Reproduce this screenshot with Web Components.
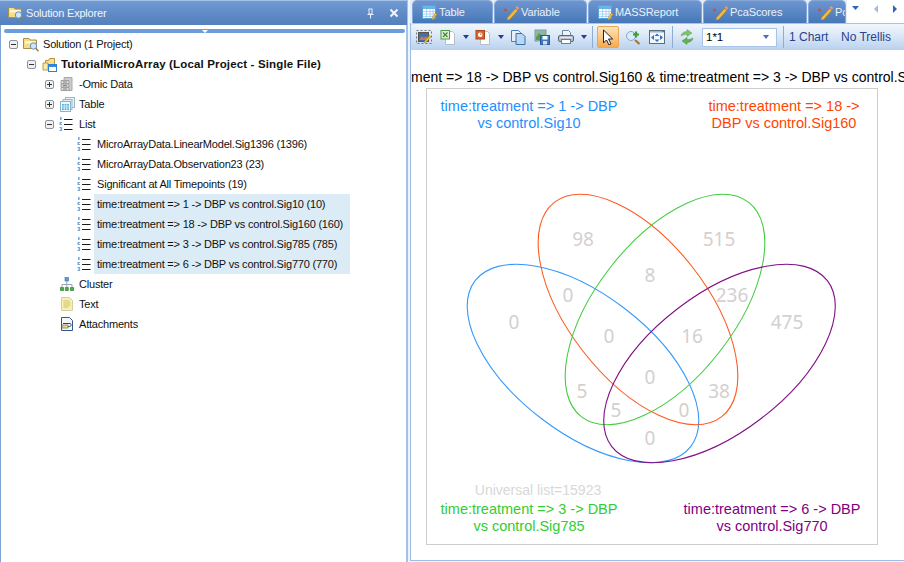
<!DOCTYPE html>
<html>
<head>
<meta charset="utf-8">
<title>Venn</title>
<style>
  html, body { margin: 0; height: 100%; overflow: hidden; background: #fff; }
  body { display: flex; width: 904px; height: 562px; font-family: "Liberation Sans", sans-serif; }
</style>
</head>
<body>
<solution-explorer>
  <tree-node depth="0" toggle="minus" icon="solution">Solution (1 Project)</tree-node>
  <tree-node depth="1" toggle="minus" icon="project" bold>TutorialMicroArray (Local Project - Single File)</tree-node>
  <tree-node depth="2" toggle="plus" icon="omic">-Omic Data</tree-node>
  <tree-node depth="2" toggle="plus" icon="table">Table</tree-node>
  <tree-node depth="2" toggle="minus" icon="list">List</tree-node>
  <tree-node depth="3" icon="list">MicroArrayData.LinearModel.Sig1396 (1396)</tree-node>
  <tree-node depth="3" icon="list">MicroArrayData.Observation23 (23)</tree-node>
  <tree-node depth="3" icon="list">Significant at All Timepoints (19)</tree-node>
  <tree-node depth="3" icon="list" selected>time:treatment =&gt; 1 -&gt; DBP vs control.Sig10 (10)</tree-node>
  <tree-node depth="3" icon="list" selected>time:treatment =&gt; 18 -&gt; DBP vs control.Sig160 (160)</tree-node>
  <tree-node depth="3" icon="list" selected>time:treatment =&gt; 3 -&gt; DBP vs control.Sig785 (785)</tree-node>
  <tree-node depth="3" icon="list" selected>time:treatment =&gt; 6 -&gt; DBP vs control.Sig770 (770)</tree-node>
  <tree-node depth="2" icon="cluster">Cluster</tree-node>
  <tree-node depth="2" icon="note">Text</tree-node>
  <tree-node depth="2" icon="attach">Attachments</tree-node>
</solution-explorer>
<doc-workspace>
  <doc-tab slot="tabs" icon="tabletab" width="81">Table</doc-tab>
  <doc-tab slot="tabs" icon="pencil" width="93">Variable</doc-tab>
  <doc-tab slot="tabs" icon="tabletab" width="114">MASSReport</doc-tab>
  <doc-tab slot="tabs" icon="pencil" width="104">PcaScores</doc-tab>
  <doc-tab slot="tabs" icon="pencil" width="38">Pc</doc-tab>
  <chart-toolbar slot="toolbar"></chart-toolbar>
  <venn-chart></venn-chart>
</doc-workspace>

<script>
const ICONS = {
  solution: `<path d="M.5 2.500h5.500l1 1.500h6.500v8.500H.5z" fill="#f6dc84" stroke="#a8904a"/><path d="M2 5h10v2.500H2z" fill="#fff6cf"/><circle cx="10.500" cy="10" r="3.200" fill="#cfe4f8" stroke="#6d8fb5"/><path d="M12.700 12.300l2.800 3" stroke="#a07a40" stroke-width="1.600"/>`,
  project: `<path d="M4.500 4.500h3l1-2h5v9h-9z" fill="#f9e08a" stroke="#b8923c"/><path d="M2 7h5v7H2z" fill="#fbe9a8" stroke="#c09a44"/><rect x="7.500" y="8.500" width="8" height="7" fill="#fff" stroke="#2f7fd6"/><path d="M7.500 9h8v2h-8z" fill="#2f8be0"/>`,
  omic: `<path d="M5 1.500h8v13H5z" fill="#cdcdcd" stroke="#a8a8a8"/><path d="M2 4.500h8v3H2zM2 8h8v3H2zM2 11.500h8v3H2z" fill="#dedede" stroke="#a0a0a0"/><path d="M4 6h4M4 9.500h4M4 13h4" stroke="#858585"/>`,
  table: `<rect x="6.500" y="1.500" width="9" height="10" fill="#e6f1f7" stroke="#9fb9c4"/><rect x="4" y="3.500" width="9" height="10" fill="#d9ebf4" stroke="#9fb9c4"/><rect x="1.500" y="5.500" width="10" height="10" fill="#eef7fb" stroke="#8fb2c4"/><path d="M3 8h7v6H3z" fill="#52b2ea"/><path d="M3 10h7M3 12h7M5.300 8v6M7.700 8v6" stroke="#d8f0fc" stroke-width=".8"/>`,
  list: `<path d="M1 1h1.600v3H1zM.5 6h2.600v1H2v1h1.100v1H.5zM.5 11h2.600v4H.5v-1h1.600v-.5H1v-1h1.100V12H.5z" fill="#5b9bd9" opacity=".85"/><path d="M5 3.500h8.500M5 8.500h8.500M5 13.500h8.500" stroke="#1a1a1a" stroke-width="1.100"/>`,
  cluster: `<rect x="6" y="1.500" width="3.500" height="3.500" fill="#5b9be0" stroke="#3a70b5" stroke-width=".6"/><path d="M7.800 5v3M3 11V8.500h10V11M7.800 8.500V11" fill="none" stroke="#9aa8b4"/><path d="M1.500 11.500h3v3h-3zM6.300 11.500h3v3h-3zM11.500 11.500h3v3h-3z" fill="#4dae4d" stroke="#2a802a" stroke-width=".7"/>`,
  note: `<path d="M2.500 1.500h8l3 3v10h-11z" fill="#f7f0b0" stroke="#cfcfa8"/><path d="M4.500 5h6M4.500 7h7M4.500 9h7M4.500 11h5" stroke="#cfc070"/>`,
  attach: `<path d="M2.500 1.500h8l3 3v10h-11z" fill="#f3f6fa" stroke="#34568f"/><path d="M4 7.500h7c1.500 0 1.500 3-.4 3H5.500" fill="none" stroke="#444" stroke-width="1"/><path d="M3 9h6v3H3z" fill="#e6d98a" stroke="#77713f" stroke-width=".7"/>`,
  tabletab: `<rect x="1.500" y="1.500" width="13" height="13" fill="#fff" stroke="#5aa2dc"/><path d="M2 2h12v3H2z" fill="#6bb4ea"/><path d="M2 7.500h12M2 10h12M2 12.500h12M5.500 5v9M9 5v9M12 5v9" stroke="#9ccbf0" stroke-width=".8"/><path d="M10.500 15l4-6 1.600 1.100-4 6z" fill="#f4bd3d" stroke="#a56f1c" stroke-width=".5"/>`,
  pencil: `<path d="M4.500 13.500l8-9 2.300 2-8 9-3 .8z" fill="#f2bb3c" stroke="#ad7a20" stroke-width=".6"/><path d="M12.500 3.500l1.600-1.600 2.200 2-1.600 1.800z" fill="#e9967a"/><circle cx="2.500" cy="6" r="1.400" fill="#d14b3a"/><circle cx="6" cy="4.500" r="1" fill="#6b8fc2"/><circle cx="2.600" cy="10.500" r="1" fill="#5c7fb5"/>`,
  picture: `<rect x=".5" y="1.500" width="15" height="13" fill="none" stroke="#777" stroke-dasharray="2 2"/><rect x="2.500" y="3.500" width="10" height="9" fill="#4a6c9e" stroke="#555"/><path d="M3 11l3-4 2 2 2-2 2 4z" fill="#b37f6a"/><path d="M8 13l5.500-6.500 1.500 1.200L9.500 14z" fill="#f4c53a" stroke="#9c6f1a" stroke-width=".5"/>`,
  excel: `<path d="M5.500 2.500h7l2 2v11h-9z" fill="#fff" stroke="#b5bfca"/><rect x="1" y="1.500" width="8.500" height="8.500" fill="#dcefd4" stroke="#4f9a3f"/><path d="M3 3.500l4.500 4.500M7.500 3.500L3 8" stroke="#3e8a2e" stroke-width="1.200"/>`,
  ppt: `<path d="M5.500 2.500h7l2 2v11h-9z" fill="#fff" stroke="#b5bfca"/><rect x="1" y="1.500" width="8.500" height="8.500" fill="#d9632a" stroke="#a7461a"/><circle cx="5.200" cy="5.700" r="2.300" fill="#fff"/><path d="M5.200 3.700v2h2" fill="#d9632a"/>`,
  copy: `<path d="M1.500 1.500h7l2 2v9h-9z" fill="#e7f0fa" stroke="#4e7fb5"/><path d="M6 4.500h6l3 3v8H6z" fill="#b9d6f3" stroke="#3c6ea8"/>`,
  save: `<rect x="1" y="1" width="11" height="11" fill="#8fb8a4" stroke="#7c9cb0"/><path d="M2 8l3-4 3 3 3-2v6H2z" fill="#5c9c4a"/><rect x="6.500" y="6.500" width="9" height="9" fill="#3f78c0" stroke="#2b5a99"/><rect x="8.500" y="7" width="5" height="3.500" fill="#fff"/><rect x="9" y="12" width="4" height="3.500" fill="#d5dfeb"/>`,
  printer: `<path d="M4.500 1.500h6l2 2v4h-8z" fill="#eef4fb" stroke="#6f88a8"/><rect x=".5" y="6.500" width="15" height="6" rx="1.500" fill="#b9c2cc" stroke="#5c6876"/><rect x="3.500" y="10.500" width="9" height="4" fill="#fff" stroke="#6f7d8c"/><path d="M2 8.500h12" stroke="#e6ebf0"/>`,
  pointer: `<path d="M3.500 1v13l3-3 2.500 5 2-1-2.500-5h4.200z" fill="#fff" stroke="#222" stroke-width="1"/>`,
  zoom: `<circle cx="6" cy="7" r="4.500" fill="#d9ecfa" stroke="#8aa6bd"/><path d="M10 11l4.500 4" stroke="#9c7a3c" stroke-width="2.200"/><path d="M11 2.500v6M8 5.500h6" stroke="#3d9b3d" stroke-width="2.200"/>`,
  fit: `<rect x=".5" y="1.500" width="15" height="13" fill="#f2f6fb" stroke="#5a6c80"/><path d="M1 2h14v1.500H1z" fill="#9eb2c8"/><path d="M13 2h2v1h-2z" fill="#d9534f"/><path d="M2 8.500l3-2.500v5zM14 8.500L11 6v5zM8 4.500L5.500 7h5zM8 13l-2.500-2.500h5z" fill="#2e74c0"/>`,
  refresh: `<path d="M2 7c.5-3 3-4.500 6-4.500V.5l5 3.500-5 3.500V5.500c-2.500 0-4 .5-6 1.500z" fill="#7cc46a" stroke="#4f9c40" stroke-width=".4"/><path d="M14 9c-.5 3-3 4.500-6 4.500v2L3 12l5-3.500v2c2.500 0 4-.5 6-1.500z" fill="#5fb350" stroke="#3a8c2e" stroke-width=".4"/>`,
};

function iconSvg(name) {
  return `<svg width="16" height="16" viewBox="0 0 16 16" aria-hidden="true">${ICONS[name] || ""}</svg>`;
}

class SolutionExplorer extends HTMLElement {
  constructor() {
    super();
    this.shadow = this.attachShadow({ mode: "open" });
  }

  connectedCallback() {
    this.shadow.innerHTML = `
    <style>
      :host {
        display: flex;
        flex-direction: column;
        width: 407px;
        height: 562px;
        flex: none;
        background: #fff;
        box-sizing: border-box;
      }
      .title {
        height: 25px;
        display: flex;
        align-items: center;
        gap: 2px;
        padding: 0 8px 0 8px;
        color: #f2f6fc;
        font-size: 11px;
        letter-spacing: -.2px;
        background: linear-gradient(#6f9ad2 0, #5f8ac6 55%, #5480bd 100%);
        border-top: 1px solid #a5c2e8;
        box-sizing: border-box;
      }
      .title svg { flex: none; }
      .name { flex: 1; }
      .pin, .close { display: flex; }
      .pin { margin-right: 11px; }
      .frame {
        flex: 1;
        display: flex;
        flex-direction: column;
        background: #fff;
        border-left: 1px solid #7fa3d4;
        border-right: 1px solid #a8c3e8;
        padding: 0 1px 0 3px;
      }
      .grip {
        margin-top: 4px;
        height: 4px;
        border-radius: 2px;
        background: #6d9edb;
        display: flex;
        justify-content: center;
        flex: none;
      }
      .grip i {
        width: 0;
        height: 0;
        border: 3px solid transparent;
        border-top: 3px solid #fff;
        border-bottom: 0;
        margin-top: 1px;
      }
      .tree { padding-top: 1px; margin-left: -4px; }
    </style>
    <div class="title">
      ${iconSvg("solution")}
      <span class="name">Solution Explorer</span>
      <span class="pin"><svg width="11" height="11" viewBox="0 0 11 11"><path d="M3.500 1h4M4 1v5h3V1M2.500 6.500h6M5.500 7v3.500" fill="none" stroke="#e8f0fa"/></svg></span>
      <span class="close"><svg width="10" height="10" viewBox="0 0 10 10"><path d="M1.500 1.500l7 7M8.500 1.500l-7 7" stroke="#f2f6fc" stroke-width="2"/></svg></span>
    </div>
    <div class="frame">
      <div class="grip"><i></i></div>
      <div class="tree"><slot></slot></div>
    </div>`;
  }
}

class TreeNode extends HTMLElement {
  constructor() {
    super();
    this.shadow = this.attachShadow({ mode: "open" });
  }

  connectedCallback() {
    const depth = Number(this.getAttribute("depth") || 0);
    const toggle = this.getAttribute("toggle");
    const sign = toggle === "plus" ? "M2 4.500h5M4.500 2v5" : "M2 4.500h5";
    const box = toggle
      ? `<svg width="9" height="9" viewBox="0 0 9 9"><rect x=".5" y=".5" width="8" height="8" rx="1.500" fill="#eef0f3" stroke="#8d939b"/><path d="${sign}" stroke="#333"/></svg>`
      : "";
    this.shadow.innerHTML = `
    <style>
      :host {
        display: block;
        height: 20px;
        color: #111;
        font-size: 11px;
        letter-spacing: -.2px;
        white-space: nowrap;
      }
      .row {
        display: flex;
        align-items: center;
        height: 20px;
        padding-left: ${9 + 18 * depth}px;
      }
      .toggle { width: 9px; height: 9px; margin-right: 5px; flex: none; display: flex; }
      .icon { width: 16px; height: 16px; flex: none; display: flex; margin-right: 1px; }
      .label { padding: 0 3px; height: 20px; line-height: 20px; box-sizing: border-box; }
      :host([bold]) .label { font-weight: 700; font-size: 11.500px; letter-spacing: .15px; }
      :host([selected]) .label { background: #dcecf6; width: 256px; }
    </style>
    <div class="row">
      <span class="toggle">${box}</span>
      <span class="icon">${iconSvg(this.getAttribute("icon"))}</span>
      <span class="label"><slot></slot></span>
    </div>`;
  }
}

class DocWorkspace extends HTMLElement {
  constructor() {
    super();
    this.shadow = this.attachShadow({ mode: "open" });
  }

  connectedCallback() {
    this.shadow.innerHTML = `
    <style>
      :host {
        display: flex;
        flex-direction: column;
        flex: 1;
        min-width: 0;
        height: 562px;
        box-sizing: border-box;
        border-left: 1px solid #a3c0e8;
        padding: 0 0 1px 2px;
        background: #eef4fb;
      }
      .strip { display: flex; height: 23px; flex: none; background: #fff; }
      .tabs { flex: 1; min-width: 0; display: flex; gap: 1px; overflow: hidden; padding-left: 2px; background: #e4edf8; }
      .nav { width: 57px; flex: none; display: flex; align-items: center; padding-bottom: 5px; box-sizing: border-box; background: #fff; }
      .nav svg { display: block; }
      .panel {
        flex: 1;
        min-height: 0;
        display: flex;
        flex-direction: column;
        background: #fff;
        border-left: 1px solid #9dbce6;
        border-bottom: 1px solid #9dbce6;
      }
    </style>
    <div class="strip">
      <div class="tabs"><slot name="tabs"></slot></div>
      <div class="nav">
        <svg width="57" height="12" viewBox="0 0 57 12">
          <path d="M5 3h7l-3.500 4z" fill="#2f66b8"/>
          <path d="M31 2v8l-4-4z" fill="#a9bcd4"/>
          <path d="M46 2v8l4-4z" fill="#2f66b8"/>
        </svg>
      </div>
    </div>
    <div class="panel">
      <slot name="toolbar"></slot>
      <slot></slot>
    </div>`;
  }
}

class DocTab extends HTMLElement {
  constructor() {
    super();
    this.shadow = this.attachShadow({ mode: "open" });
  }

  connectedCallback() {
    this.shadow.innerHTML = `
    <style>
      :host {
        display: flex;
        flex: none;
        align-items: center;
        gap: 2px;
        width: ${this.getAttribute("width")}px;
        height: 23px;
        box-sizing: border-box;
        padding: 0 0 1px 8px;
        overflow: hidden;
        white-space: nowrap;
        font-size: 11px;
        letter-spacing: -.1px;
        color: #eaf1fb;
        border-radius: 5px 5px 0 0;
        border: 1px solid #85a8d8;
        border-bottom: 0;
        background: linear-gradient(#6d96cf, #4777b8);
      }
      svg { flex: none; }
    </style>
    ${iconSvg(this.getAttribute("icon"))}<slot></slot>`;
  }
}

class ToolBtn extends HTMLElement {
  constructor() {
    super();
    this.shadow = this.attachShadow({ mode: "open" });
  }

  connectedCallback() {
    this.shadow.innerHTML = `
    <style>
      :host {
        display: flex;
        flex: none;
        width: 24px;
        height: 22px;
        align-items: center;
        justify-content: center;
      }
      :host([active]) {
        width: 22px;
        margin: 0 2px 0 1px;
        box-sizing: border-box;
        border: 1px solid #e6a857;
        border-radius: 2px;
        background: linear-gradient(#fde3b6, #fbc57f 55%, #f7a94c);
      }
      svg { display: block; }
    </style>
    ${iconSvg(this.getAttribute("icon"))}`;
  }
}

class ChartToolbar extends HTMLElement {
  constructor() {
    super();
    this.shadow = this.attachShadow({ mode: "open" });
  }

  connectedCallback() {
    const caret = `<span class="caret"></span>`;
    const sep = (w) => `<span class="sep" style="width:${w}px"><i></i></span>`;
    this.shadow.innerHTML = `
    <style>
      :host {
        display: flex;
        align-items: center;
        height: 27px;
        flex: none;
        box-sizing: border-box;
        padding-left: 1px;
        white-space: nowrap;
        font-size: 12px;
        color: #27418f;
        background: linear-gradient(#f1f6fc 0, #dbe8f7 45%, #b9d1ef 100%);
        border-top: 1px solid #a9c4e9;
        border-radius: 3px 0 0 0;
      }
      .caret {
        width: 11px;
        height: 4px;
        display: flex;
        justify-content: center;
        flex: none;
      }
      .caret::before {
        content: "";
        border: 3px solid transparent;
        border-top: 4px solid #1f3f8f;
        border-bottom: 0;
      }
      .sep { display: flex; justify-content: center; height: 22px; flex: none; }
      .sep i { width: 1px; background: #8fadd4; }
      .combo {
        width: 75px;
        height: 19px;
        margin-left: 3px;
        flex: none;
        box-sizing: border-box;
        border: 1px solid #a9c4e9;
        background: #fff;
        color: #000;
        display: flex;
        align-items: center;
        justify-content: space-between;
        padding: 0 7px 0 3px;
        font-size: 11.500px;
      }
      .combo .caret { width: 7px; }
      .combo .caret::before { border-top-color: #4a6fa8; }
      .txt { flex: none; }
    </style>
    <tool-btn icon="picture"></tool-btn>
    <tool-btn icon="excel"></tool-btn>${caret}
    <tool-btn icon="ppt"></tool-btn>${caret}
    <tool-btn icon="copy"></tool-btn>
    <tool-btn icon="save"></tool-btn>
    <tool-btn icon="printer"></tool-btn>${caret}
    ${sep(7)}
    <tool-btn icon="pointer" active></tool-btn>
    <tool-btn icon="zoom"></tool-btn>
    <tool-btn icon="fit"></tool-btn>
    ${sep(6)}
    <tool-btn icon="refresh"></tool-btn>
    <div class="combo"><span>1*1</span><span class="caret"></span></div>
    ${sep(12)}
    <span class="txt" style="width:52px">1 Chart</span>
    <span class="txt">No Trellis</span>`;
  }
}

class VennChart extends HTMLElement {
  constructor() {
    super();
    this.shadow = this.attachShadow({ mode: "open" });
  }

  connectedCallback() {
    const counts = [
      [583, 239, "98"], [719, 239, "515"], [650, 275, "8"], [568, 295, "0"],
      [732, 295, "236"], [514, 322, "0"], [787, 322, "475"], [609, 336, "0"],
      [692, 336, "16"], [650, 377, "0"], [582, 391, "5"], [719, 391, "38"],
      [616, 410, "5"], [684, 410, "0"], [650, 438, "0"],
    ];
    this.shadow.innerHTML = `
    <style>
      :host {
        display: flex;
        flex-direction: column;
        flex: 1;
        min-height: 0;
        overflow: hidden;
      }
      .title {
        height: 38px;
        flex: none;
        display: flex;
        align-items: flex-end;
        padding: 0 0 3px 0;
        box-sizing: border-box;
        white-space: nowrap;
        overflow: hidden;
        font: 14px "Liberation Sans", sans-serif;
        color: #000;
      }
      .title span { flex: none; }
      .box {
        width: 452px;
        height: 457px;
        margin-left: 15px;
        flex: none;
        box-sizing: border-box;
        border: 1px solid #cdcdcd;
        display: flex;
        flex-direction: column;
        font: 14.500px/17px "Liberation Sans", sans-serif;
        text-align: center;
      }
      .head { display: flex; padding-top: 9px; height: 43px; box-sizing: border-box; flex: none; }
      .lbl { width: 180px; flex: none; white-space: nowrap; }
      .blue { color: #1e90ff; margin-left: 12px; }
      .red { color: #ff4500; margin-left: 75px; }
      .green { color: #32cd32; margin-left: 12px; }
      .purple { color: #800080; margin-left: 63px; }
      svg { display: block; flex: none; }
      .uni { color: #d8d8d8; font-size: 14px; width: 178px; margin-left: 22px; padding-top: 1px; height: 19px; flex: none; white-space: nowrap; }
      .foot { display: flex; flex: none; }
      text { font: 19px "Noto Sans", sans-serif; fill: #d3d0d0; text-anchor: middle; dominant-baseline: central; }
      ellipse { fill: none; stroke-width: 1.100; }
    </style>
    <div class="title"><span>ment =&gt; 18 -&gt; DBP vs control.Sig160 &amp; time:treatment =&gt; 3 -&gt; DBP vs control.Sig</span></div>
    <div class="box">
      <div class="head">
        <div class="lbl blue">time:treatment =&gt; 1 -&gt; DBP<br>vs control.Sig10</div>
        <div class="lbl red">time:treatment =&gt; 18 -&gt;<br>DBP vs control.Sig160</div>
      </div>
      <svg width="450" height="349" viewBox="427 132 450 349">
        <ellipse cx="583" cy="363.500" rx="136" ry="69" transform="rotate(37.500 583 363.500)" stroke="#3399ff"/>
        <ellipse cx="638" cy="309.500" rx="136" ry="69" transform="rotate(52 638 309.500)" stroke="#ff5a1f"/>
        <ellipse cx="665" cy="309.500" rx="136" ry="69" transform="rotate(-52 665 309.500)" stroke="#44cc44"/>
        <ellipse cx="719.500" cy="363.500" rx="136" ry="69" transform="rotate(-37.500 719.500 363.500)" stroke="#800f85"/>
        ${counts.map(([x, y, t]) => `<text x="${x}" y="${y}">${t}</text>`).join("")}
      </svg>
      <div class="uni">Universal list=15923</div>
      <div class="foot">
        <div class="lbl green">time:treatment =&gt; 3 -&gt; DBP<br>vs control.Sig785</div>
        <div class="lbl purple">time:treatment =&gt; 6 -&gt; DBP<br>vs control.Sig770</div>
      </div>
    </div>`;
  }
}

customElements.define("solution-explorer", SolutionExplorer);
customElements.define("tree-node", TreeNode);
customElements.define("doc-workspace", DocWorkspace);
customElements.define("doc-tab", DocTab);
customElements.define("tool-btn", ToolBtn);
customElements.define("chart-toolbar", ChartToolbar);
customElements.define("venn-chart", VennChart);
</script>
</body>
</html>
